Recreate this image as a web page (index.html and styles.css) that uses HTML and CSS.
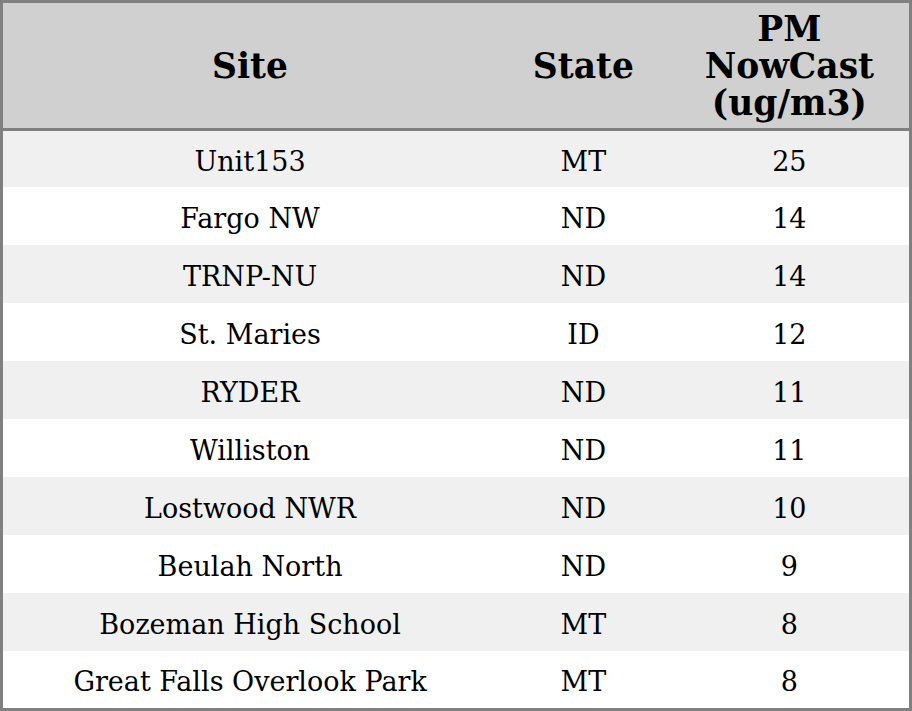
FILE: index.html
```html
<!DOCTYPE html>
<html>
<head>
<meta charset="utf-8">
<link rel="stylesheet" href="styles.css">
</head>
<body>
<table class="data">
  <colgroup>
    <col class="c-site">
    <col class="c-state">
    <col class="c-pm">
  </colgroup>
  <thead>
    <tr><th>Site</th><th>State</th><th>PM<br>NowCast<br>(ug/m3)</th></tr>
  </thead>
  <tbody>
    <tr><td>Unit153</td><td>MT</td><td>25</td></tr>
    <tr><td>Fargo NW</td><td>ND</td><td>14</td></tr>
    <tr><td>TRNP-NU</td><td>ND</td><td>14</td></tr>
    <tr><td>St. Maries</td><td>ID</td><td>12</td></tr>
    <tr><td>RYDER</td><td>ND</td><td>11</td></tr>
    <tr><td>Williston</td><td>ND</td><td>11</td></tr>
    <tr><td>Lostwood NWR</td><td>ND</td><td>10</td></tr>
    <tr><td>Beulah North</td><td>ND</td><td>9</td></tr>
    <tr><td>Bozeman High School</td><td>MT</td><td>8</td></tr>
    <tr><td>Great Falls Overlook Park</td><td>MT</td><td>8</td></tr>
  </tbody>
</table>
</body>
</html>
```
FILE: styles.css
```css
html, body {
  margin: 0;
  padding: 0;
  background: #ffffff;
}
.data {
  width: 912px;
  border-collapse: collapse;
  border: 3px solid #808080;
  font-family: "DejaVu Serif", serif;
  color: #000;
  table-layout: fixed;
}
.c-site { width: 494px; }
.c-state { width: 172px; }
.c-pm { width: 240px; }
.data th {
  background: #d0d0d0;
  font-weight: bold;
  font-size: 34.5px;
  line-height: 37px;
  height: 123px;
  padding: 2px 0 0 0;
  text-align: center;
  vertical-align: middle;
  border-bottom: 3px solid #808080;
}
.data td {
  font-size: 27px;
  height: 54px;
  padding: 4px 0 0 0;
  text-align: center;
  vertical-align: middle;
}
.data tbody tr:first-child td { height: 52px; }
.data tbody tr:last-child td { height: 53px; }
.data tbody tr:nth-child(odd) { background: #f0f0f0; }
```
